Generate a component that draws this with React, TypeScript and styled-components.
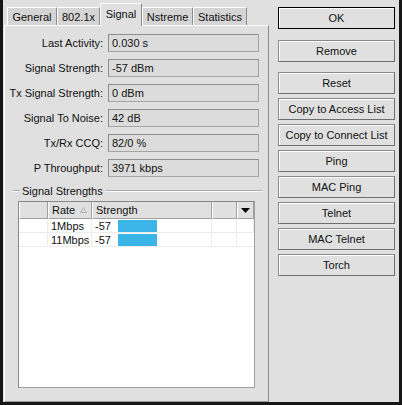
import { Fragment } from "react"
import styled, { createGlobalStyle } from "styled-components"

const Global = createGlobalStyle`
  html, body {
    margin: 0;
    padding: 0;
    background: #e0e0e0;
  }
  * {
    box-sizing: border-box;
  }
`

const Window = styled.div`
  width: 402px;
  height: 405px;
  display: flex;
  background: #e0e0e0;
  border-left: 3px solid #161616;
  border-right: 3px solid #161616;
  border-bottom: 3px solid #161616;
  font-family: "Liberation Sans", Arial, sans-serif;
  font-size: 11px;
  color: #111;
`

const LeftSide = styled.div`
  width: 265px;
  margin-left: 1px;
  display: flex;
  flex-direction: column;
`

const TabBar = styled.div`
  height: 25px;
  display: flex;
  align-items: flex-end;
  padding-left: 3px;
`

const Tab = styled.div<{ $w: number; $active?: boolean }>`
  width: ${(p) => p.$w}px;
  height: ${(p) => (p.$active ? 23 : 18)}px;
  margin-bottom: ${(p) => (p.$active ? -1 : 0)}px;
  position: relative;
  z-index: ${(p) => (p.$active ? 2 : 1)};
  display: flex;
  align-items: center;
  justify-content: center;
  padding-bottom: ${(p) => (p.$active ? 3 : 0)}px;
  background: ${(p) => (p.$active ? "#e0e0e0" : "#d5d5d5")};
  border-top: 1px solid #fff;
  border-left: 1px solid #fff;
  border-right: 1px solid #8a8a8a;
`

const Panel = styled.div`
  flex: 1;
  display: flex;
  flex-direction: column;
  padding-top: 8px;
  border-top: 1px solid #fff;
  border-left: 1px solid #fff;
  border-right: 1px solid #8a8a8a;
  border-bottom: 1px solid #9a9a9a;
`

const FieldRow = styled.div`
  display: grid;
  grid-template-columns: 98px 151px;
  column-gap: 5px;
  height: 18px;
  margin-bottom: 7px;
`

const Label = styled.div`
  display: flex;
  align-items: center;
  justify-content: flex-end;
  white-space: nowrap;
`

const Field = styled.div`
  display: flex;
  align-items: center;
  padding-left: 3px;
  background: #dcdcdc;
  border: 1px solid #a4a4a4;
  border-top-color: #8e8e8e;
  border-left-color: #8e8e8e;
`

const GroupHead = styled.div`
  display: flex;
  align-items: center;
  height: 13px;
  margin-left: 8px;
  margin-right: 6px;
  gap: 2px;
`

const GroupLine = styled.div<{ $w?: number }>`
  ${(p) => (p.$w ? `width: ${p.$w}px;` : "flex: 1;")}
  height: 2px;
  border-top: 1px solid #a8a8a8;
  border-bottom: 1px solid #fff;
`

const GroupTitle = styled.span`
  padding-right: 1px;
`

const List = styled.div`
  width: 237px;
  height: 187px;
  margin: 4px 0 0 13px;
  background: #fff;
  border: 1px solid #a0a0a0;
  border-top-color: #888;
  border-left-color: #888;
`

const Grid = styled.div`
  display: grid;
  grid-template-columns: 29px 44px 120px 25px 17px;
`

const HeadCell = styled.div`
  height: 17px;
  display: flex;
  align-items: center;
  gap: 5px;
  padding-left: 3px;
  background: #e0e0e0;
  border-left: 1px solid #fff;
  border-right: 1px solid #a0a0a0;
  border-bottom: 1px solid #a0a0a0;
  &:last-child {
    border-right: none;
    justify-content: center;
    padding-left: 0;
  }
`

const Cell = styled.div`
  height: 14px;
  display: flex;
  align-items: center;
  padding-left: 3px;
  border-right: 1px solid #ececec;
  border-bottom: 1px solid #ececec;
  white-space: nowrap;
  &:last-child {
    border-right: none;
  }
`

const Bar = styled.span<{ $w: number }>`
  display: inline-block;
  width: ${(p) => p.$w}px;
  height: 12px;
  margin-left: 7px;
  background: #3bb4e7;
`

const Buttons = styled.div`
  width: 117px;
  margin-left: 9px;
  padding-top: 7px;
  display: flex;
  flex-direction: column;
`

const Button = styled.button<{ $gap: number; $default?: boolean }>`
  height: 22px;
  margin-top: ${(p) => p.$gap}px;
  padding: 0;
  font-family: inherit;
  font-size: 11px;
  font-weight: 400;
  color: #111;
  background: #e0e0e0;
  border: 1px solid ${(p) => (p.$default ? "#000" : "#8a8a8a")};
  ${(p) => (p.$default ? "" : "border-bottom-color: #6e6e6e; border-right-color: #6e6e6e;")}
  box-shadow: inset 1px 1px 0 #fff;
  cursor: pointer;
`

const fields = [
  ["Last Activity:", "0.030 s"],
  ["Signal Strength:", "-57 dBm"],
  ["Tx Signal Strength:", "0 dBm"],
  ["Signal To Noise:", "42 dB"],
  ["Tx/Rx CCQ:", "82/0 %"],
  ["P Throughput:", "3971 kbps"],
]

const tabs: [string, number][] = [
  ["General", 50],
  ["802.1x", 43],
  ["Signal", 42],
  ["Nstreme", 51],
  ["Statistics", 54],
]

const rates = ["1Mbps", "11Mbps"]

const actions: [string, number][] = [
  ["OK", 0],
  ["Remove", 11],
  ["Reset", 10],
  ["Copy to Access List", 4],
  ["Copy to Connect List", 4],
  ["Ping", 4],
  ["MAC Ping", 4],
  ["Telnet", 4],
  ["MAC Telnet", 4],
  ["Torch", 4],
]

export default function App() {
  return (
    <>
      <Global />
      <Window>
        <LeftSide>
          <TabBar>
            {tabs.map(([name, w]) => (
              <Tab key={name} $w={w} $active={name === "Signal"}>
                {name}
              </Tab>
            ))}
          </TabBar>
          <Panel>
            {fields.map(([label, value]) => (
              <FieldRow key={label}>
                <Label>{label}</Label>
                <Field>{value}</Field>
              </FieldRow>
            ))}
            <GroupHead>
              <GroupLine $w={7} />
              <GroupTitle>Signal Strengths</GroupTitle>
              <GroupLine />
            </GroupHead>
            <List>
              <Grid>
                <HeadCell />
                <HeadCell>
                  Rate
                  <svg width="7" height="6" viewBox="0 0 7 6">
                    <path d="M3.5 0.5 L6.5 5.5 L0.5 5.5 Z" fill="none" stroke="#b0b0b0" strokeWidth="1" />
                  </svg>
                </HeadCell>
                <HeadCell>Strength</HeadCell>
                <HeadCell />
                <HeadCell>
                  <svg width="9" height="5" viewBox="0 0 9 5">
                    <path d="M0 0 H9 L4.5 5 Z" fill="#000" />
                  </svg>
                </HeadCell>
                {rates.map((r) => (
                  <Fragment key={r}>
                    <Cell />
                    <Cell>{r}</Cell>
                    <Cell>
                      -57
                      <Bar $w={39} />
                    </Cell>
                    <Cell />
                    <Cell />
                  </Fragment>
                ))}
              </Grid>
            </List>
          </Panel>
        </LeftSide>
        <Buttons>
          {actions.map(([name, gap]) => (
            <Button key={name} $gap={gap} $default={name === "OK"}>
              {name}
            </Button>
          ))}
        </Buttons>
      </Window>
    </>
  )
}
